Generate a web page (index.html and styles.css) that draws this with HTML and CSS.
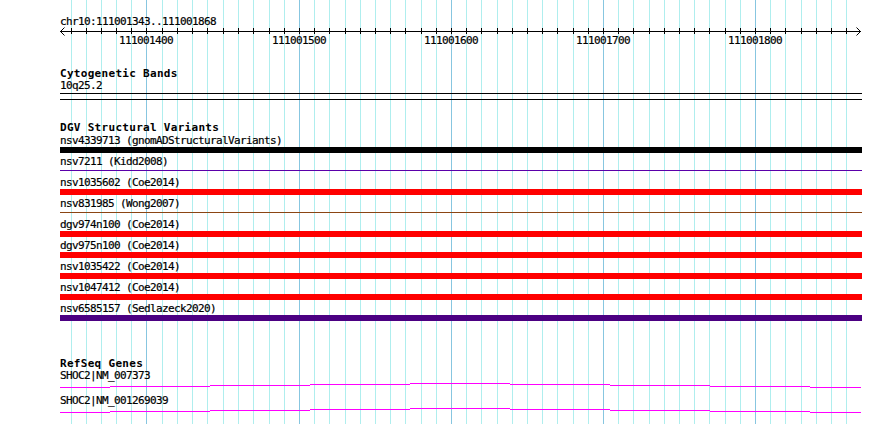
FILE: index.html
```html
<!DOCTYPE html>
<html lang="en">
<head>
    <meta charset="UTF-8">
    <meta name="viewport" content="width=device-width, initial-scale=1.0">
    <title>Genome Browser - chr10:111001343..111001868</title>
    <link rel="stylesheet" href="styles.css">
</head>
<body>
    <div class="browser">
        <!-- 10 bp grid behind all tracks -->
        <svg class="grid" width="890" height="424" viewBox="0 0 890 424">
            <path class="grid-minor" d="M71.5 0V424M86.5 0V424M101.5 0V424M116.5 0V424M131.5 0V424M162.5 0V424M177.5 0V424M192.5 0V424M207.5 0V424M223.5 0V424M238.5 0V424M253.5 0V424M269.5 0V424M284.5 0V424M314.5 0V424M329.5 0V424M345.5 0V424M360.5 0V424M375.5 0V424M390.5 0V424M405.5 0V424M421.5 0V424M436.5 0V424M466.5 0V424M481.5 0V424M497.5 0V424M512.5 0V424M527.5 0V424M542.5 0V424M557.5 0V424M573.5 0V424M588.5 0V424M618.5 0V424M633.5 0V424M649.5 0V424M664.5 0V424M679.5 0V424M694.5 0V424M709.5 0V424M725.5 0V424M740.5 0V424M770.5 0V424M785.5 0V424M801.5 0V424M816.5 0V424M831.5 0V424M846.5 0V424"/>
            <path class="grid-major" d="M146.5 0V424M299.5 0V424M451.5 0V424M603.5 0V424M755.5 0V424"/>
        </svg>

        <div class="content">
            <svg class="ruler" width="890" height="50" viewBox="0 0 890 50">
                <text class="mono" x="60" y="25">chr10:111001343..111001868</text>
                <path class="axis" d="M60 31.5H861M64.5 27.5L60.5 31.5L64.5 35.5M856.5 27.5L860.5 31.5L856.5 35.5"/>
                <path class="axis" d="M71.5 28V34M86.5 28V34M101.5 28V34M116.5 28V34M131.5 28V34M146.5 28V34M162.5 28V34M177.5 28V34M192.5 28V34M207.5 28V34M223.5 28V34M238.5 28V34M253.5 28V34M269.5 28V34M284.5 28V34M299.5 28V34M314.5 28V34M329.5 28V34M345.5 28V34M360.5 28V34M375.5 28V34M390.5 28V34M405.5 28V34M421.5 28V34M436.5 28V34M451.5 28V34M466.5 28V34M481.5 28V34M497.5 28V34M512.5 28V34M527.5 28V34M542.5 28V34M557.5 28V34M573.5 28V34M588.5 28V34M603.5 28V34M618.5 28V34M633.5 28V34M649.5 28V34M664.5 28V34M679.5 28V34M694.5 28V34M709.5 28V34M725.5 28V34M740.5 28V34M755.5 28V34M770.5 28V34M785.5 28V34M801.5 28V34M816.5 28V34M831.5 28V34M846.5 28V34"/>
                <text class="mono tick-label" x="146" y="44">111001400</text>
                <text class="mono tick-label" x="299" y="44">111001500</text>
                <text class="mono tick-label" x="451" y="44">111001600</text>
                <text class="mono tick-label" x="603" y="44">111001700</text>
                <text class="mono tick-label" x="755" y="44">111001800</text>
            </svg>

            <div class="track cyto">
                <div class="track-title">Cytogenetic Bands</div>
                <div class="feature-label">10q25.2</div>
                <div class="band"></div>
            </div>

            <div class="track dgv">
                <div class="track-title">DGV Structural Variants</div>
                <div class="feature">
                    <div class="feature-label">nsv4339713 (gnomADStructuralVariants)</div>
                    <div class="bar bar-black"></div>
                </div>
                <div class="feature">
                    <div class="feature-label">nsv7211 (Kidd2008)</div>
                    <div class="bar-line line-purple"></div>
                </div>
                <div class="feature">
                    <div class="feature-label">nsv1035602 (Coe2014)</div>
                    <div class="bar bar-red"></div>
                </div>
                <div class="feature">
                    <div class="feature-label">nsv831985 (Wong2007)</div>
                    <div class="bar-line line-brown"></div>
                </div>
                <div class="feature">
                    <div class="feature-label">dgv974n100 (Coe2014)</div>
                    <div class="bar bar-red"></div>
                </div>
                <div class="feature">
                    <div class="feature-label">dgv975n100 (Coe2014)</div>
                    <div class="bar bar-red"></div>
                </div>
                <div class="feature">
                    <div class="feature-label">nsv1035422 (Coe2014)</div>
                    <div class="bar bar-red"></div>
                </div>
                <div class="feature">
                    <div class="feature-label">nsv1047412 (Coe2014)</div>
                    <div class="bar bar-red"></div>
                </div>
                <div class="feature">
                    <div class="feature-label">nsv6585157 (Sedlazeck2020)</div>
                    <div class="bar bar-indigo"></div>
                </div>
            </div>

            <div class="track refseq">
                <div class="track-title">RefSeq Genes</div>
                <div class="transcript">
                    <div class="feature-label">SHOC2|NM_007373</div>
                    <svg class="gene" width="802" height="13" viewBox="0 0 802 13">
                        <path d="M0 5.5H50M50 4.5H150M150 3.5H250M250 2.5H350M350 1.5H450M450 2.5H550M550 3.5H650M650 4.5H750M750 5.5H801"/>
                    </svg>
                </div>
                <div class="transcript">
                    <div class="feature-label">SHOC2|NM_001269039</div>
                    <svg class="gene" width="802" height="13" viewBox="0 0 802 13">
                        <path d="M0 5.5H50M50 4.5H150M150 3.5H250M250 2.5H350M350 1.5H450M450 2.5H550M550 3.5H650M650 4.5H750M750 5.5H801"/>
                    </svg>
                </div>
            </div>
        </div>
    </div>
</body>
</html>
```

FILE: styles.css
```css
body {
    margin: 0;
    background: #fff;
    color: #000;
}
.browser {
    position: relative;
    width: 890px;
    height: 424px;
    overflow: hidden;
}
.grid {
    position: absolute;
    top: 0;
    left: 0;
    shape-rendering: crispEdges;
}
.grid-minor {
    stroke: #afeeee;
    stroke-width: 1;
}
.grid-major {
    stroke: #87c6e0;
    stroke-width: 1;
}
.content {
    position: relative;
}
.ruler {
    display: block;
}
.axis {
    stroke: #000;
    stroke-width: 1;
    fill: none;
}
.mono {
    font-family: "DejaVu Sans Mono", "Liberation Mono", monospace;
    font-size: 11px;
    letter-spacing: -0.62px;
    fill: #000;
    stroke: #000;
    stroke-width: 0.2px;
}
.tick-label {
    text-anchor: middle;
}
.track {
    padding-left: 60px;
    font-family: "DejaVu Sans Mono", "Liberation Mono", monospace;
    font-size: 11px;
    line-height: 12px;
}
.track-title {
    font-weight: bold;
    letter-spacing: 0.3px;
    white-space: nowrap;
}
.feature-label {
    letter-spacing: -0.62px;
    white-space: nowrap;
    -webkit-text-stroke: 0.2px #000;
}
.cyto {
    margin-top: 18px;
}
.band {
    width: 802px;
    height: 7px;
    margin-top: 1px;
    box-sizing: border-box;
    border-top: 1px solid #000;
    border-bottom: 1px solid #000;
}
.dgv {
    margin-top: 22px;
}
.dgv .track-title {
    margin-bottom: 1px;
}
.feature {
    padding-bottom: 3px;
}
.bar {
    width: 802px;
    height: 6px;
}
.bar-black {
    background: #000;
}
.bar-red {
    background: #ff0000;
}
.bar-indigo {
    background: #4b0082;
}
.bar-line {
    width: 802px;
    height: 1px;
    padding: 2px 0 3px;
    background-clip: content-box;
}
.line-purple {
    background-color: #5a00aa;
}
.line-brown {
    background-color: #8b4513;
}
.refseq {
    margin-top: 34px;
}
.gene {
    display: block;
    shape-rendering: crispEdges;
}
.gene path {
    stroke: #ff00ff;
    stroke-width: 1;
    fill: none;
}
```
